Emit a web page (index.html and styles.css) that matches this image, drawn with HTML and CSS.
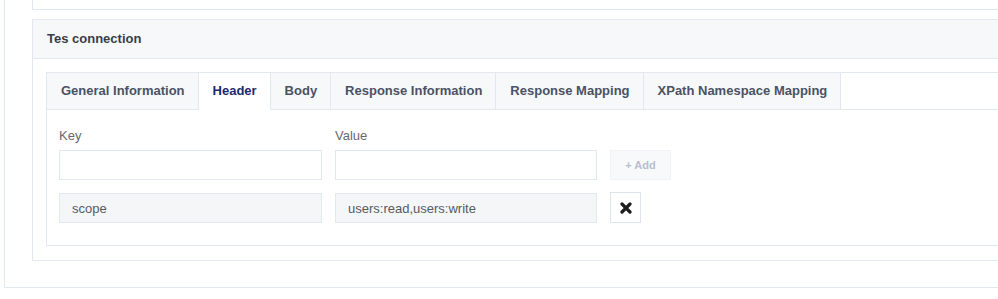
FILE: index.html
```html
<!DOCTYPE html>
<html lang="en">

<head>
    <meta charset="UTF-8">
    <meta name="viewport" content="width=device-width, initial-scale=1.0">
    <title>Tes connection</title>
    <link rel="stylesheet" href="styles.css">
</head>

<body>
    <div class="page">
        <!-- previous card, only its bottom edge is visible -->
        <div class="card prev-card"></div>

        <div class="card">
            <div class="card-header">Tes connection</div>
            <div class="card-body">
                <div class="tab-panel">
                    <ul class="tabs">
                        <li class="tab">General Information</li>
                        <li class="tab active">Header</li>
                        <li class="tab">Body</li>
                        <li class="tab">Response Information</li>
                        <li class="tab">Response Mapping</li>
                        <li class="tab">XPath Namespace Mapping</li>
                    </ul>

                    <div class="tab-content">
                        <div class="header-grid">
                            <label class="field-label" for="key">Key</label>
                            <label class="field-label" for="value">Value</label>
                            <span></span>

                            <input type="text" id="key" class="field">
                            <input type="text" id="value" class="field">
                            <button class="btn-add" disabled>+ Add</button>

                            <input type="text" class="field readonly" value="scope" readonly>
                            <input type="text" class="field readonly" value="users:read,users:write" readonly>
                            <button class="btn-remove" title="Remove">
                                <svg width="12" height="12" viewBox="0 0 12 12">
                                    <path d="M2 2 L10 10 M10 2 L2 10" stroke="#1d1d1d" stroke-width="3.2" stroke-linecap="round" fill="none"/>
                                </svg>
                            </button>
                        </div>
                    </div>
                </div>
            </div>
        </div>
    </div>
</body>

</html>
```

FILE: styles.css
```css
body {
    margin: 0;
    background-color: #fff;
    font-family: 'Liberation Sans', Arial, sans-serif;
    overflow: hidden;
}

.page {
    width: 1400px;
    margin: -19px 0 0 4px;
    padding: 0 27px 26px;
    border: 1px solid #e3e7ee;
    border-top: none;
    background-color: #fff;
}

.card {
    border: 1px solid #e3e7ee;
    background-color: #fff;
    margin-top: 9px;
}

.prev-card {
    box-sizing: border-box;
    height: 29px;
    margin-top: 0;
    border-top: none;
}

.card-header {
    height: 38px;
    line-height: 38px;
    padding-left: 14px;
    background-color: #f7f8fa;
    border-bottom: 1px solid #e3e7ee;
    font-size: 13px;
    font-weight: bold;
    color: #383d47;
}

.card-body {
    padding: 13px 0 14px 13px;
}

.tab-panel {
    border: 1px solid #e3e7ee;
    border-right: none;
}

.tabs {
    display: flex;
    margin: 0;
    padding: 0;
    list-style: none;
    border-bottom: 1px solid #e3e7ee;
}

.tab {
    height: 36px;
    line-height: 36px;
    padding: 0 13px 0 14px;
    background-color: #f7f8fa;
    border-right: 1px solid #e3e7ee;
    margin-bottom: -1px;
    border-bottom: 1px solid #e3e7ee;
    font-size: 13px;
    font-weight: bold;
    color: #4a5263;
    white-space: nowrap;
}

.tab.active {
    background-color: #fff;
    border-bottom-color: #fff;
    color: #1e2a6e;
}

.tab-content {
    padding: 18px 12px 22px;
}

.header-grid {
    display: grid;
    grid-template-columns: 263px 262px auto;
    column-gap: 13px;
    row-gap: 13px;
    justify-items: start;
}

.field-label {
    font-size: 13px;
    line-height: 16px;
    color: #666a70;
    margin-bottom: -7px;
}

.field {
    box-sizing: border-box;
    width: 100%;
    height: 30px;
    padding: 0 12px;
    border: 1px solid #e3e7ee;
    background-color: #fff;
    font-family: 'Liberation Sans', Arial, sans-serif;
    font-size: 13px;
    color: #555a62;
    outline: none;
}

.field.readonly {
    background-color: #f5f6f8;
}

.btn-add {
    width: 61px;
    height: 30px;
    border: 1px solid #f1f3f6;
    background-color: #f8f9fb;
    color: #b7bfcd;
    font-family: 'Liberation Sans', Arial, sans-serif;
    font-size: 11px;
    font-weight: bold;
    padding: 0;
}

.btn-remove {
    box-sizing: border-box;
    width: 31px;
    height: 31px;
    margin-top: -1px;
    border: 1px solid #dfe4eb;
    background-color: #fff;
    padding: 0;
    display: flex;
    align-items: center;
    justify-content: center;
    cursor: pointer;
}
```
